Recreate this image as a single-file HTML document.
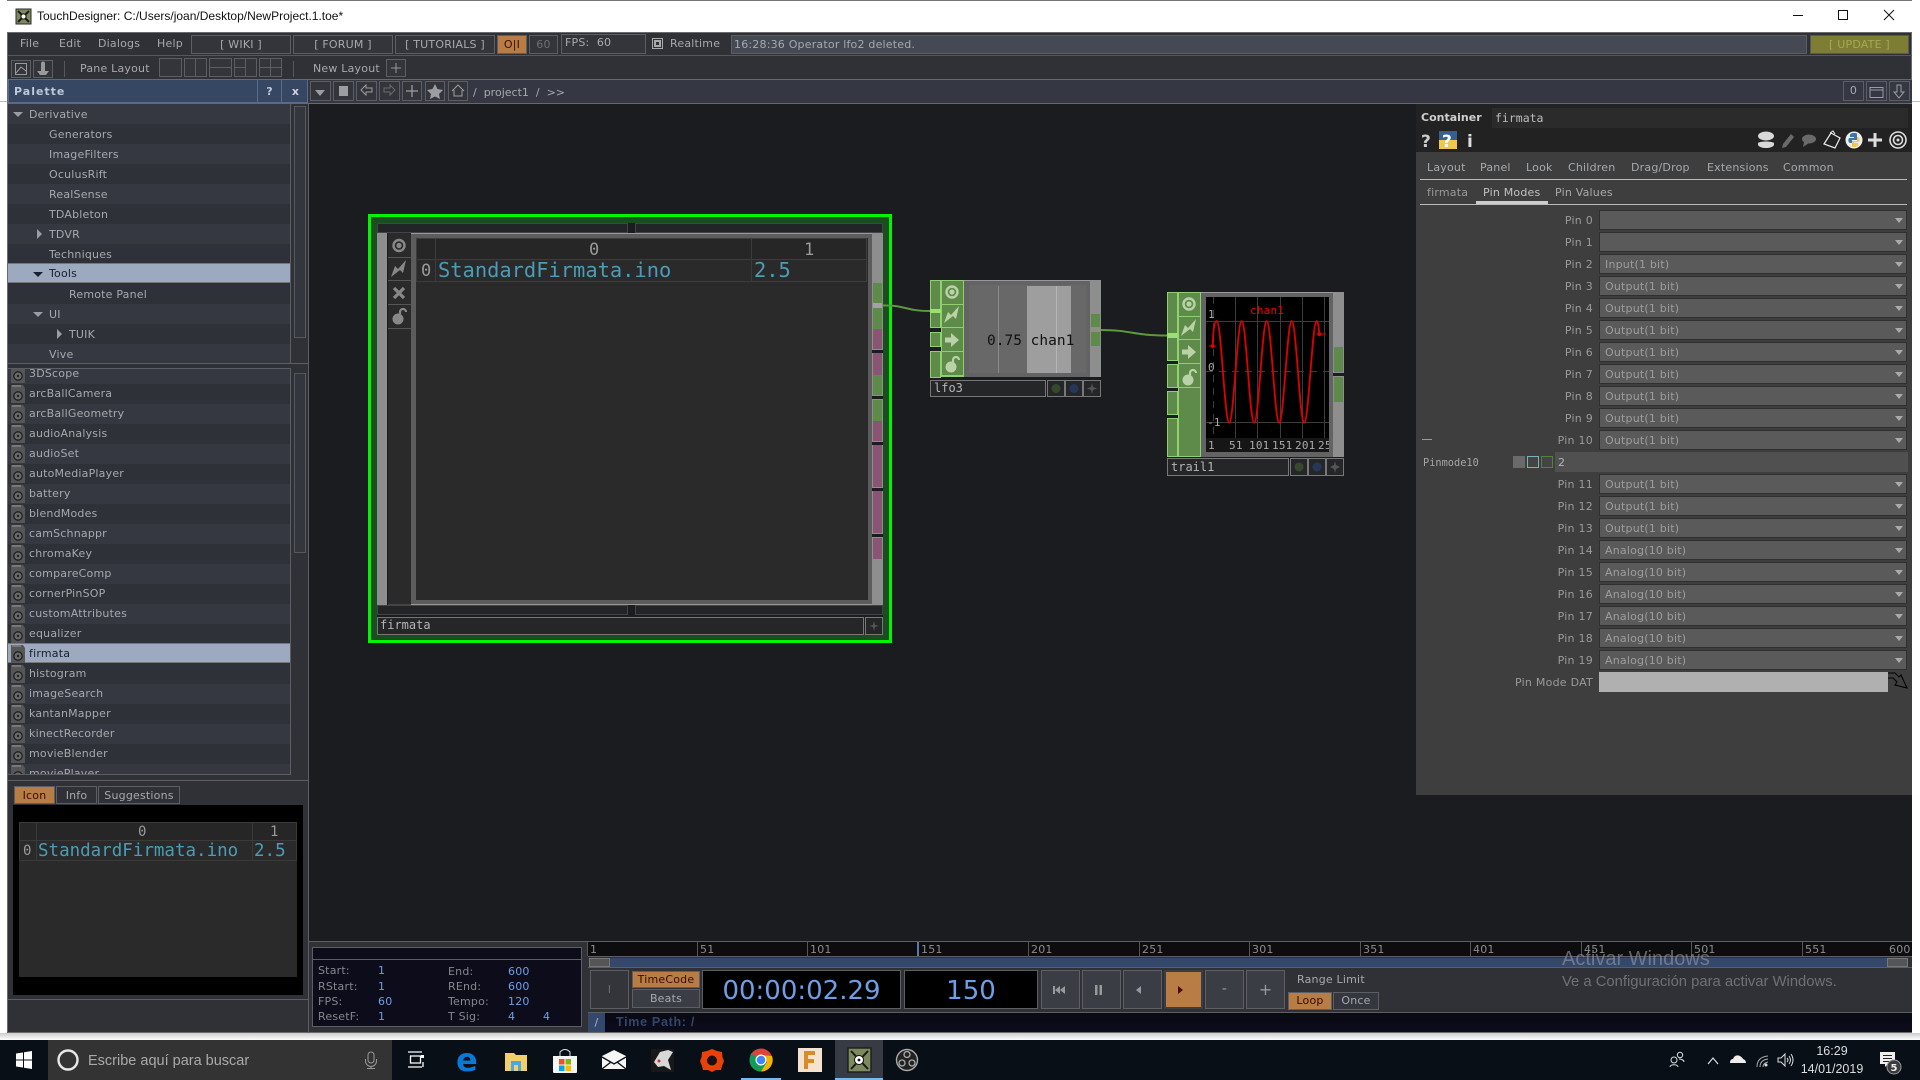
<!DOCTYPE html>
<html lang="es"><head><meta charset="utf-8"><title>TouchDesigner</title>
<style>
html,body{margin:0;padding:0;width:1920px;height:1080px;overflow:hidden;background:#fff}
body{position:relative;font:11px/1 "DejaVu Sans","Liberation Sans",sans-serif;color:#a6a9ad;letter-spacing:.2px}
div{position:absolute;box-sizing:border-box;white-space:nowrap}
.b{border:1px solid #5b5e63;text-align:center;line-height:17px;background:#33353b}
.r{left:8px;width:282px;height:20px;line-height:20px;padding-top:1px;background:#2e3138;color:#a6a9ad}
.r.o{background:#353841}
.r.s{background:#9da9bf;color:#17202e;border-top:1px solid #777;border-bottom:1px solid #777;line-height:18px;padding-top:1px}
.ops .r{padding-top:0}
.ops .r.s{padding-top:1px}
.l{left:1400px;width:193px;height:20px;line-height:20px;padding-top:1px;text-align:right;color:#9a9a9a;letter-spacing:.25px}
.d{left:1599px;width:308px;height:20px;line-height:18px;padding-top:1px;background:#5a5a5a;border:1px solid #2f2f2f;color:#9d9d9d;padding-left:5px}
.d:after{content:"";position:absolute;right:3px;top:7px;border:4px solid transparent;border-top:5px solid #aaa;border-bottom:0}
.m{font-family:"DejaVu Sans Mono","Liberation Mono",monospace;letter-spacing:0}
.lab{color:#85878c}.val{color:#6f9ee8}
.rt{top:942px;height:14px;line-height:14px;padding-top:1px;color:#8c8c8c;padding-left:2px;border-left:1px solid #555}
.tb{background:#3b3d44;border:1px solid #5d5f64;top:970px;width:39px;height:39px}
svg{position:absolute;left:0;top:0}
</style></head><body>

<!-- window frame -->
<div style="left:7px;top:0;width:1905px;height:32px;background:#fff;border-top:1px solid #777"></div>
<div style="left:7px;top:32px;width:1905px;height:1001px;background:#2f3136;border:1px solid #6a6a6a"></div>
<div style="left:0;top:101px;width:7px;height:1px;background:#bbb"></div>
<div style="left:1912px;top:101px;width:8px;height:1px;background:#bbb"></div>
<div style="left:0;top:1033px;width:1920px;height:7px;background:linear-gradient(#ccc,#fff)"></div>
<div style="left:37px;top:9px;color:#111;font:12px/14px 'Liberation Sans',sans-serif;letter-spacing:0">TouchDesigner: C:/Users/joan/Desktop/NewProject.1.toe*</div>

<!-- menu row -->
<div style="left:8px;top:55px;width:1904px;height:1px;background:#55575c"></div>
<div style="left:8px;top:79px;width:1904px;height:1px;background:#66686c"></div>
<div style="left:8px;top:103px;width:1904px;height:1px;background:#66686c"></div>
<div style="left:20px;top:36px;height:16px;line-height:16px">File</div>
<div style="left:59px;top:36px;height:16px;line-height:16px">Edit</div>
<div style="left:98px;top:36px;height:16px;line-height:16px">Dialogs</div>
<div style="left:157px;top:36px;height:16px;line-height:16px">Help</div>
<div class="b" style="left:191px;top:35px;width:100px;height:19px">[ WIKI ]</div>
<div class="b" style="left:293px;top:35px;width:100px;height:19px">[ FORUM ]</div>
<div class="b" style="left:395px;top:35px;width:100px;height:19px">[ TUTORIALS ]</div>
<div class="b" style="left:497px;top:35px;width:30px;height:19px;background:#b87d45;color:#3a0a00">O|I</div>
<div class="b" style="left:529px;top:35px;width:29px;height:19px;color:#6d6f73">60</div>
<div class="b" style="left:561px;top:34px;width:85px;height:20px;text-align:left;padding-left:3px;line-height:16px">FPS:&nbsp; 60</div>
<div style="left:670px;top:36px;height:16px;line-height:16px">Realtime</div>
<div class="b" style="left:731px;top:35px;width:1076px;height:19px;background:#454954;text-align:left;padding-left:2px">16:28:36 Operator lfo2 deleted.</div>
<div class="b" style="left:1810px;top:35px;width:99px;height:19px;background:#7d7d36;color:#a8a850;border-color:#55575c">[ UPDATE ]</div>

<!-- row 2 -->
<div class="b" style="left:11px;top:60px;width:20px;height:18px"></div>
<div class="b" style="left:33px;top:60px;width:20px;height:18px"></div>
<div style="left:64px;top:61px;width:1px;height:16px;background:#55575c"></div>
<div style="left:80px;top:61px;height:16px;line-height:16px">Pane Layout</div>
<div class="b" style="left:159px;top:58px;width:23px;height:19px"></div>
<div class="b" style="left:184px;top:58px;width:23px;height:19px"></div>
<div class="b" style="left:209px;top:58px;width:23px;height:19px"></div>
<div class="b" style="left:234px;top:58px;width:23px;height:19px"></div>
<div class="b" style="left:259px;top:58px;width:23px;height:19px"></div>
<div style="left:293px;top:61px;width:1px;height:16px;background:#55575c"></div>
<div style="left:313px;top:61px;height:16px;line-height:16px">New Layout</div>
<div class="b" style="left:386px;top:59px;width:20px;height:18px"></div>

<!-- palette header -->
<div style="left:8px;top:79px;width:300px;height:24px;background:#364763;border:1px solid #5a6a88;color:#bdc8da;font-weight:bold;line-height:24px;padding-left:5px;letter-spacing:1px">Palette</div>
<div style="left:257px;top:80px;width:25px;height:22px;border-left:1px solid #5a6a88;border-right:1px solid #5a6a88;color:#bdc8da;font-weight:bold;line-height:23px;text-align:center">?</div>
<div style="left:283px;top:80px;width:25px;height:22px;color:#cdd4e0;font-weight:bold;line-height:23px;text-align:center">x</div>

<!-- path row -->
<div style="left:308px;top:80px;width:1604px;height:23px;background:#353842"></div>
<div class="b" style="left:310px;top:81px;width:21px;height:20px"></div>
<div class="b" style="left:333px;top:81px;width:21px;height:20px"></div>
<div class="b" style="left:356px;top:81px;width:21px;height:20px"></div>
<div class="b" style="left:379px;top:81px;width:21px;height:20px"></div>
<div class="b" style="left:402px;top:81px;width:20px;height:20px"></div>
<div class="b" style="left:425px;top:81px;width:20px;height:20px"></div>
<div class="b" style="left:448px;top:81px;width:20px;height:20px"></div>
<div style="left:473px;top:85px;height:16px;line-height:16px;letter-spacing:0">/&nbsp; project1&nbsp; /&nbsp; &gt;&gt;</div>
<div class="b" style="left:1843px;top:81px;width:21px;height:20px;background:#353842">0</div>
<div class="b" style="left:1866px;top:81px;width:21px;height:20px;background:#353842"></div>
<div class="b" style="left:1889px;top:81px;width:21px;height:20px;background:#353842"></div>

<!-- network bg -->
<div style="left:308px;top:104px;width:1604px;height:838px;background:#1a1c20"></div>

<!-- tree list -->
<div class="r o" style="top:104px;padding-left:21px">Derivative</div>
<div class="r" style="top:124px;padding-left:41px">Generators</div>
<div class="r o" style="top:144px;padding-left:41px">ImageFilters</div>
<div class="r" style="top:164px;padding-left:41px">OculusRift</div>
<div class="r o" style="top:184px;padding-left:41px">RealSense</div>
<div class="r" style="top:204px;padding-left:41px">TDAbleton</div>
<div class="r o" style="top:224px;padding-left:41px">TDVR</div>
<div class="r" style="top:244px;padding-left:41px">Techniques</div>
<div class="r s" style="top:263px;padding-left:41px">Tools</div>
<div class="r" style="top:284px;padding-left:61px">Remote Panel</div>
<div class="r o" style="top:304px;padding-left:41px">UI</div>
<div class="r" style="top:324px;padding-left:61px">TUIK</div>
<div class="r o" style="top:344px;padding-left:41px;height:19px">Vive</div>
<div style="left:290px;top:104px;width:1px;height:259px;background:#5b5e63"></div>
<div style="left:294px;top:106px;width:12px;height:232px;background:#33363c;border:1px solid #54575c"></div>
<div style="left:8px;top:363px;width:300px;height:1px;background:#5b5e63"></div>
<div style="left:8px;top:368px;width:282px;height:1px;background:#5b5e63"></div>

<!-- operators list -->
<div class="ops" style="left:8px;top:369px;width:282px;height:405px;overflow:hidden">
<div class="r o" style="left:0;top:-5px;padding-left:21px">3DScope</div>
<div class="r" style="left:0;top:15px;padding-left:21px">arcBallCamera</div>
<div class="r o" style="left:0;top:35px;padding-left:21px">arcBallGeometry</div>
<div class="r" style="left:0;top:55px;padding-left:21px">audioAnalysis</div>
<div class="r o" style="left:0;top:75px;padding-left:21px">audioSet</div>
<div class="r" style="left:0;top:95px;padding-left:21px">autoMediaPlayer</div>
<div class="r o" style="left:0;top:115px;padding-left:21px">battery</div>
<div class="r" style="left:0;top:135px;padding-left:21px">blendModes</div>
<div class="r o" style="left:0;top:155px;padding-left:21px">camSchnappr</div>
<div class="r" style="left:0;top:175px;padding-left:21px">chromaKey</div>
<div class="r o" style="left:0;top:195px;padding-left:21px">compareComp</div>
<div class="r" style="left:0;top:215px;padding-left:21px">cornerPinSOP</div>
<div class="r o" style="left:0;top:235px;padding-left:21px">customAttributes</div>
<div class="r" style="left:0;top:255px;padding-left:21px">equalizer</div>
<div class="r s" style="left:0;top:274px;padding-left:21px">firmata</div>
<div class="r" style="left:0;top:295px;padding-left:21px">histogram</div>
<div class="r o" style="left:0;top:315px;padding-left:21px">imageSearch</div>
<div class="r" style="left:0;top:335px;padding-left:21px">kantanMapper</div>
<div class="r o" style="left:0;top:355px;padding-left:21px">kinectRecorder</div>
<div class="r" style="left:0;top:375px;padding-left:21px">movieBlender</div>
<div class="r o" style="left:0;top:395px;padding-left:21px">moviePlayer</div>
</div>
<div style="left:8px;top:774px;width:282px;height:1px;background:#5b5e63"></div>
<div style="left:290px;top:368px;width:1px;height:407px;background:#5b5e63"></div>
<div style="left:294px;top:373px;width:12px;height:180px;background:#33363c;border:1px solid #54575c"></div>
<div style="left:8px;top:780px;width:300px;height:1px;background:#5b5e63"></div>
<div style="left:308px;top:104px;width:1px;height:929px;background:#5b5e63"></div>

<!-- preview tabs -->
<div class="b" style="left:14px;top:786px;width:41px;height:18px;background:#b87d45;color:#3a0a00;line-height:18px">Icon</div>
<div class="b" style="left:56px;top:786px;width:41px;height:18px;background:#2f3136;line-height:18px">Info</div>
<div class="b" style="left:98px;top:786px;width:82px;height:18px;background:#2f3136;line-height:18px">Suggestions</div>
<div style="left:13px;top:805px;width:290px;height:190px;background:#000"></div>
<div style="left:19px;top:822px;width:278px;height:155px;background:#2a2a2a"></div>
<div style="left:19px;top:822px;width:278px;height:19px;background:#262626;border:1px solid #3a3a3a"></div>
<div style="left:19px;top:841px;width:278px;height:20px;border:1px solid #3a3a3a;border-top:0"></div>
<div style="left:36px;top:822px;width:1px;height:39px;background:#3a3a3a"></div>
<div style="left:252px;top:822px;width:1px;height:39px;background:#3a3a3a"></div>
<div class="m" style="left:138px;top:823px;color:#999;font-size:14px;line-height:19px">0</div>
<div class="m" style="left:270px;top:823px;color:#999;font-size:14px;line-height:19px">1</div>
<div class="m" style="left:23px;top:841px;color:#999;font-size:14px;line-height:20px">0</div>
<div class="m" style="left:38px;top:841px;color:#4c9bb8;font-size:17.5px;line-height:21px">StandardFirmata.ino</div>
<div class="m" style="left:254px;top:841px;color:#4c9bb8;font-size:17.5px;line-height:21px">2.5</div>
<div style="left:8px;top:999px;width:300px;height:1px;background:#5b5e63"></div>

<!-- firmata node -->
<div style="left:368px;top:214px;width:524px;height:429px;border:3px solid #00f500;background:#1a4d1f"></div>
<div style="left:375px;top:221px;width:510px;height:415px;background:#1a1c20;border:2px solid #1a4d1f"></div>
<div style="left:377px;top:223px;width:251px;height:10px;border:1px solid #444;background:#222427"></div>
<div style="left:635px;top:223px;width:248px;height:10px;border:1px solid #444;background:#222427"></div>
<div style="left:377px;top:233px;width:10px;height:372px;background:#8e8e8e"></div>
<div style="left:388px;top:233px;width:23px;height:372px;background:#2a2a2a;border-bottom:1px solid #444"></div>
<div style="left:388px;top:257px;width:23px;height:1px;background:#555"></div>
<div style="left:388px;top:280px;width:23px;height:1px;background:#555"></div>
<div style="left:388px;top:304px;width:23px;height:1px;background:#555"></div>
<div style="left:388px;top:328px;width:23px;height:1px;background:#555"></div>
<div style="left:411px;top:233px;width:461px;height:372px;background:#5c5c5c;border-top:1px solid #999;border-bottom:1px solid #999"></div>
<div style="left:416px;top:238px;width:452px;height:362px;background:#2a2a2a"></div>
<div style="left:416px;top:238px;width:451px;height:22px;background:#262626;border:1px solid #3c3c3c"></div>
<div style="left:416px;top:260px;width:451px;height:22px;border:1px solid #3c3c3c;border-top:0"></div>
<div style="left:435px;top:238px;width:1px;height:44px;background:#3c3c3c"></div>
<div style="left:751px;top:238px;width:1px;height:44px;background:#3c3c3c"></div>
<div class="m" style="left:589px;top:239px;color:#9a9a9a;font-size:17px;line-height:22px">0</div>
<div class="m" style="left:804px;top:239px;color:#9a9a9a;font-size:17px;line-height:22px">1</div>
<div class="m" style="left:421px;top:260px;color:#9a9a9a;font-size:17px;line-height:22px">0</div>
<div class="m" style="left:438px;top:258px;color:#4c9bb8;font-size:20.4px;line-height:24px">StandardFirmata.ino</div>
<div class="m" style="left:754px;top:258px;color:#4c9bb8;font-size:20.4px;line-height:24px">2.5</div>
<div style="left:872px;top:233px;width:11px;height:372px;background:#8e8e8e"></div>
<div style="left:873px;top:283px;width:9px;height:20px;background:#5e8a4a"></div>
<div style="left:873px;top:303px;width:9px;height:5px;background:#a2a2a6"></div>
<div style="left:873px;top:308px;width:9px;height:21px;background:#5e8a4a"></div>
<div style="left:873px;top:329px;width:9px;height:20px;background:#8a5474"></div>
<div style="left:872px;top:350px;width:11px;height:3px;background:#1a1c20"></div>
<div style="left:873px;top:353px;width:9px;height:22px;background:#8a5474"></div>
<div style="left:873px;top:375px;width:9px;height:20px;background:#5e8a4a"></div>
<div style="left:872px;top:396px;width:11px;height:3px;background:#1a1c20"></div>
<div style="left:873px;top:400px;width:9px;height:21px;background:#5e8a4a"></div>
<div style="left:873px;top:421px;width:9px;height:20px;background:#8a5474"></div>
<div style="left:872px;top:442px;width:11px;height:3px;background:#1a1c20"></div>
<div style="left:873px;top:445px;width:9px;height:42px;background:#8a5474"></div>
<div style="left:872px;top:488px;width:11px;height:3px;background:#1a1c20"></div>
<div style="left:873px;top:491px;width:9px;height:42px;background:#8a5474"></div>
<div style="left:872px;top:534px;width:11px;height:3px;background:#1a1c20"></div>
<div style="left:873px;top:538px;width:9px;height:21px;background:#8a5474"></div>
<div style="left:377px;top:605px;width:251px;height:10px;border:1px solid #444;background:#222427"></div>
<div style="left:635px;top:605px;width:248px;height:10px;border:1px solid #444;background:#222427"></div>
<div class="m" style="left:377px;top:617px;width:487px;height:18px;background:#242628;border:1px solid #777;color:#b5b5b5;font-size:12px;line-height:14px;padding-left:2px">firmata</div>
<div style="left:865px;top:617px;width:18px;height:18px;background:#242628;border:1px solid #777"></div>

<!-- lfo3 node -->
<div style="left:930px;top:280px;width:11px;height:48px;background:#5e8a4a;border:1px solid #8fd070"></div>
<div style="left:930px;top:332px;width:11px;height:15px;background:#5e8a4a;border:1px solid #8fd070"></div>
<div style="left:930px;top:351px;width:11px;height:27px;background:#5e8a4a;border:1px solid #8fd070"></div>
<div style="left:930px;top:309px;width:11px;height:4px;background:#9be070"></div>
<div style="left:941px;top:280px;width:23px;height:97px;background:#5e8a4a;border:1px solid #8fd070"></div>
<div style="left:941px;top:304px;width:23px;height:1px;background:#8fd070"></div>
<div style="left:941px;top:327px;width:23px;height:1px;background:#8fd070"></div>
<div style="left:941px;top:351px;width:23px;height:1px;background:#8fd070"></div>
<div style="left:941px;top:375px;width:23px;height:1px;background:#8fd070"></div>
<div style="left:964px;top:280px;width:126px;height:97px;background:#636363;border-top:1px solid #999"></div>
<div style="left:969px;top:285px;width:117px;height:88px;background:#686868"></div>
<div style="left:998px;top:286px;width:1px;height:87px;background:#8a8a8a"></div>
<div style="left:1027px;top:286px;width:44px;height:87px;background:#9e9e9e"></div>
<div style="left:1056px;top:286px;width:1px;height:87px;background:#b5b5b5"></div>
<div class="m" style="left:987px;top:331px;color:#111;font-size:14.5px;line-height:20px">0.75 chan1</div>
<div style="left:1090px;top:280px;width:11px;height:97px;background:#8e8e8e"></div>
<div style="left:1091px;top:314px;width:9px;height:13px;background:#5e8a4a"></div>
<div style="left:1091px;top:332px;width:9px;height:14px;background:#5e8a4a"></div>
<div class="m" style="left:930px;top:380px;width:116px;height:17px;background:#242628;border:1px solid #777;color:#b5b5b5;font-size:12px;line-height:15px;padding-left:3px">lfo3</div>
<div style="left:1047px;top:380px;width:18px;height:17px;background:#242628;border:1px solid #777"></div>
<div style="left:1065px;top:380px;width:18px;height:17px;background:#242628;border:1px solid #777"></div>
<div style="left:1083px;top:380px;width:18px;height:17px;background:#242628;border:1px solid #777"></div>

<!-- trail1 node -->
<div style="left:1167px;top:292px;width:11px;height:69px;background:#5e8a4a;border:1px solid #8fd070"></div>
<div style="left:1167px;top:364px;width:11px;height:24px;background:#5e8a4a;border:1px solid #8fd070"></div>
<div style="left:1167px;top:391px;width:11px;height:24px;background:#5e8a4a;border:1px solid #8fd070"></div>
<div style="left:1167px;top:418px;width:11px;height:39px;background:#5e8a4a;border:1px solid #8fd070"></div>
<div style="left:1167px;top:333px;width:11px;height:5px;background:#9be070"></div>
<div style="left:1178px;top:292px;width:23px;height:165px;background:#5e8a4a;border:1px solid #8fd070"></div>
<div style="left:1178px;top:316px;width:23px;height:1px;background:#8fd070"></div>
<div style="left:1178px;top:339px;width:23px;height:1px;background:#8fd070"></div>
<div style="left:1178px;top:363px;width:23px;height:1px;background:#8fd070"></div>
<div style="left:1178px;top:387px;width:23px;height:1px;background:#8fd070"></div>
<div style="left:1201px;top:292px;width:132px;height:165px;background:#636363;border-top:1px solid #999"></div>
<div style="left:1206px;top:297px;width:123px;height:155px;background:#000"></div>
<div style="left:1333px;top:292px;width:11px;height:165px;background:#8e8e8e"></div>
<div style="left:1334px;top:347px;width:9px;height:25px;background:#5e8a4a"></div>
<div style="left:1333px;top:373px;width:11px;height:3px;background:#1a1c20"></div>
<div style="left:1334px;top:377px;width:9px;height:25px;background:#5e8a4a"></div>
<div class="m" style="left:1167px;top:458px;width:122px;height:18px;background:#242628;border:1px solid #777;color:#b5b5b5;font-size:12px;line-height:16px;padding-left:3px">trail1</div>
<div style="left:1290px;top:458px;width:18px;height:18px;background:#242628;border:1px solid #777"></div>
<div style="left:1308px;top:458px;width:18px;height:18px;background:#242628;border:1px solid #777"></div>
<div style="left:1326px;top:458px;width:18px;height:18px;background:#242628;border:1px solid #777"></div>

<!-- parameters -->
<div style="left:1416px;top:104px;width:496px;height:691px;background:#3e3e3e"></div>
<div style="left:1416px;top:104px;width:496px;height:48px;background:#222"></div>
<div style="left:1421px;top:110px;height:16px;line-height:16px;color:#cfcfcf;font-weight:bold;letter-spacing:0">Container</div>
<div class="m" style="left:1492px;top:108px;width:416px;height:20px;background:#2b2b2b;color:#bbb;line-height:20px;padding-left:3px;font-size:11.5px">firmata</div>
<div style="left:1427px;top:160px;height:16px;line-height:16px">Layout</div>
<div style="left:1480px;top:160px;height:16px;line-height:16px">Panel</div>
<div style="left:1526px;top:160px;height:16px;line-height:16px">Look</div>
<div style="left:1568px;top:160px;height:16px;line-height:16px">Children</div>
<div style="left:1631px;top:160px;height:16px;line-height:16px">Drag/Drop</div>
<div style="left:1707px;top:160px;height:16px;line-height:16px">Extensions</div>
<div style="left:1783px;top:160px;height:16px;line-height:16px">Common</div>
<div style="left:1420px;top:179px;width:487px;height:1px;background:#bbb"></div>
<div style="left:1427px;top:185px;height:16px;line-height:16px;color:#9a9a9a">firmata</div>
<div style="left:1483px;top:185px;height:16px;line-height:16px;color:#c0c0c0">Pin Modes</div>
<div style="left:1555px;top:185px;height:16px;line-height:16px">Pin Values</div>
<div style="left:1420px;top:204px;width:487px;height:1px;background:#bbb"></div>
<div style="left:1476px;top:201px;width:72px;height:3px;background:#ccc"></div>

<div class="l" style="top:210px">Pin 0</div><div class="d" style="top:210px"></div>
<div class="l" style="top:232px">Pin 1</div><div class="d" style="top:232px"></div>
<div class="l" style="top:254px">Pin 2</div><div class="d" style="top:254px">Input(1 bit)</div>
<div class="l" style="top:276px">Pin 3</div><div class="d" style="top:276px">Output(1 bit)</div>
<div class="l" style="top:298px">Pin 4</div><div class="d" style="top:298px">Output(1 bit)</div>
<div class="l" style="top:320px">Pin 5</div><div class="d" style="top:320px">Output(1 bit)</div>
<div class="l" style="top:342px">Pin 6</div><div class="d" style="top:342px">Output(1 bit)</div>
<div class="l" style="top:364px">Pin 7</div><div class="d" style="top:364px">Output(1 bit)</div>
<div class="l" style="top:386px">Pin 8</div><div class="d" style="top:386px">Output(1 bit)</div>
<div class="l" style="top:408px">Pin 9</div><div class="d" style="top:408px">Output(1 bit)</div>
<div class="l" style="top:430px">Pin 10</div><div class="d" style="top:430px">Output(1 bit)</div>
<div style="left:1422px;top:439px;width:10px;height:1px;background:#999"></div>
<div class="m" style="left:1423px;top:453px;height:20px;line-height:20px;color:#a5a5a5;font-size:10.3px">Pinmode10</div>
<div style="left:1513px;top:456px;width:12px;height:12px;background:#6a6a6a"></div>
<div style="left:1527px;top:456px;width:12px;height:12px;border:1px solid #7db0b8;background:#444"></div>
<div style="left:1541px;top:456px;width:12px;height:12px;border:1px solid #56803f;background:#444"></div>
<div style="left:1555px;top:452px;width:353px;height:20px;background:#505050;color:#b5b5b5;line-height:20px;padding:1px 0 0 3px">2</div>
<div class="l" style="top:474px">Pin 11</div><div class="d" style="top:474px">Output(1 bit)</div>
<div class="l" style="top:496px">Pin 12</div><div class="d" style="top:496px">Output(1 bit)</div>
<div class="l" style="top:518px">Pin 13</div><div class="d" style="top:518px">Output(1 bit)</div>
<div class="l" style="top:540px">Pin 14</div><div class="d" style="top:540px">Analog(10 bit)</div>
<div class="l" style="top:562px">Pin 15</div><div class="d" style="top:562px">Analog(10 bit)</div>
<div class="l" style="top:584px">Pin 16</div><div class="d" style="top:584px">Analog(10 bit)</div>
<div class="l" style="top:606px">Pin 17</div><div class="d" style="top:606px">Analog(10 bit)</div>
<div class="l" style="top:628px">Pin 18</div><div class="d" style="top:628px">Analog(10 bit)</div>
<div class="l" style="top:650px">Pin 19</div><div class="d" style="top:650px">Analog(10 bit)</div>
<div class="l" style="top:672px">Pin Mode DAT</div>
<div style="left:1599px;top:672px;width:289px;height:20px;background:#b0b0b0"></div>

<!-- bottom bar -->
<div style="left:309px;top:941px;width:1603px;height:1px;background:#5b5e63"></div>
<div style="left:309px;top:942px;width:279px;height:90px;background:#2f3136"></div>
<div style="left:312px;top:947px;width:270px;height:80px;background:#0c0c1a;border:1px solid #5b5e63"></div>
<div style="left:312px;top:959px;width:270px;height:1px;background:#5b5e63"></div>
<div class="lab" style="left:318px;top:963px;line-height:16px">Start:</div><div class="val" style="left:378px;top:963px;line-height:16px">1</div>
<div class="lab" style="left:318px;top:979px;line-height:16px">RStart:</div><div class="val" style="left:378px;top:979px;line-height:16px">1</div>
<div class="lab" style="left:318px;top:994px;line-height:16px">FPS:</div><div class="val" style="left:378px;top:994px;line-height:16px">60</div>
<div class="lab" style="left:318px;top:1009px;line-height:16px">ResetF:</div><div class="val" style="left:378px;top:1009px;line-height:16px">1</div>
<div class="lab" style="left:448px;top:964px;line-height:16px">End:</div><div class="val" style="left:508px;top:964px;line-height:16px">600</div>
<div class="lab" style="left:448px;top:979px;line-height:16px">REnd:</div><div class="val" style="left:508px;top:979px;line-height:16px">600</div>
<div class="lab" style="left:448px;top:994px;line-height:16px">Tempo:</div><div class="val" style="left:508px;top:994px;line-height:16px">120</div>
<div class="lab" style="left:448px;top:1009px;line-height:16px">T Sig:</div><div class="val" style="left:508px;top:1009px;line-height:16px">4</div><div class="val" style="left:543px;top:1009px;line-height:16px">4</div>

<div style="left:588px;top:942px;width:1324px;height:14px;background:#0d0d0f"></div>
<div class="rt" style="left:587px">1</div>
<div class="rt" style="left:697px">51</div>
<div class="rt" style="left:807px">101</div>
<div class="rt" style="left:917px;border-left:2px solid #5a78b0">151</div>
<div class="rt" style="left:1028px">201</div>
<div class="rt" style="left:1139px">251</div>
<div class="rt" style="left:1249px">301</div>
<div class="rt" style="left:1360px">351</div>
<div class="rt" style="left:1470px">401</div>
<div class="rt" style="left:1581px">451</div>
<div class="rt" style="left:1691px">501</div>
<div class="rt" style="left:1802px">551</div>
<div class="rt" style="left:1887px;border:0">600</div>
<div style="left:588px;top:956px;width:1324px;height:12px;background:#2f3136;border-top:1px solid #5b5e63;border-bottom:1px solid #5b5e63"></div>
<div style="left:610px;top:958px;width:1277px;height:9px;background:#34486b"></div>
<div style="left:589px;top:958px;width:21px;height:9px;background:#555;border:1px solid #777"></div>
<div style="left:1887px;top:958px;width:21px;height:9px;background:#555;border:1px solid #777"></div>
<div style="left:588px;top:968px;width:1324px;height:44px;background:#2f3136"></div>
<div class="b" style="left:590px;top:970px;width:39px;height:39px;line-height:37px;background:#33353b;color:#6a6c70">I</div>
<div class="b" style="left:632px;top:971px;width:68px;height:17px;background:#b87d45;color:#3a0a00;line-height:15px">TimeCode</div>
<div class="b" style="left:632px;top:989px;width:68px;height:19px;background:#3b3d44">Beats</div>
<div style="left:702px;top:970px;width:199px;height:39px;background:#000;border:1px solid #5b5e63;color:#6f9ee8;font-size:26px;line-height:41px;text-align:center;letter-spacing:0">00:00:02.29</div>
<div style="left:904px;top:970px;width:134px;height:39px;background:#000;border:1px solid #5b5e63;color:#6f9ee8;font-size:26px;line-height:41px;text-align:center;letter-spacing:0">150</div>
<div class="tb" style="left:1041px"></div>
<div class="tb" style="left:1082px"></div>
<div class="tb" style="left:1123px"></div>
<div class="tb" style="left:1164px;background:#b87d45;border:2px solid #3b3d44"></div>
<div class="tb" style="left:1205px;color:#999;text-align:center;line-height:37px;font-size:14px">-</div>
<div class="tb" style="left:1246px;color:#999;text-align:center;line-height:37px;font-size:16px">+</div>
<div style="left:1297px;top:972px;line-height:16px">Range Limit</div>
<div class="b" style="left:1288px;top:992px;width:44px;height:18px;background:#b87d45;color:#3a0a00;line-height:16px">Loop</div>
<div class="b" style="left:1333px;top:992px;width:46px;height:18px;background:#34373f;line-height:16px">Once</div>
<div style="left:588px;top:1012px;width:1324px;height:20px;background:linear-gradient(#0a0a12,#0b0b1d);border-top:1px solid #5b5e63"></div>
<div style="left:588px;top:1013px;width:17px;height:19px;background:#34486b;color:#9fb4d8;text-align:center;line-height:19px">/</div>
<div style="left:616px;top:1014px;line-height:17px;color:#34466a;font-weight:bold;font-family:'Liberation Sans',sans-serif;font-size:12.5px;letter-spacing:.7px">Time Path: /</div>

<div style="left:1562px;top:947px;font:20px/24px 'Liberation Sans',sans-serif;color:rgba(150,152,158,.62);letter-spacing:0">Activar Windows</div>
<div style="left:1562px;top:973px;font:14.8px/18px 'Liberation Sans',sans-serif;color:rgba(150,152,158,.62);letter-spacing:0">Ve a Configuración para activar Windows.</div>

<!-- taskbar -->
<div style="left:0;top:1040px;width:1920px;height:40px;background:#080f17"></div>
<div style="left:48px;top:1040px;width:344px;height:40px;background:#333"></div>
<div style="left:88px;top:1052px;font:14.5px/18px 'Liberation Sans',sans-serif;color:#aaa;letter-spacing:0">Escribe aquí para buscar</div>
<div style="left:835px;top:1040px;width:48px;height:40px;background:#363b44"></div>
<div style="left:741px;top:1078px;width:40px;height:2px;background:#76b9ed"></div>
<div style="left:835px;top:1078px;width:48px;height:2px;background:#76b9ed"></div>
<div style="left:1800px;top:1042px;width:64px;text-align:center;font:12.5px/18px 'Liberation Sans',sans-serif;color:#ddd;letter-spacing:0">16:29</div>
<div style="left:1790px;top:1060px;width:84px;text-align:center;font:12.5px/18px 'Liberation Sans',sans-serif;color:#ddd;letter-spacing:0">14/01/2019</div>

<!-- icons and graphics -->
<svg width="1920" height="1080" viewBox="0 0 1920 1080" fill="none">
<defs>
<g id="ring"><circle r="5.5" stroke="currentColor" stroke-width="2.4"/><circle r="2.6" fill="currentColor"/></g>
<path id="bolt" fill="currentColor" d="M-8 8 L-4 -3 L-1 0 L7 -9 L4 4 L1 1 Z"/>
<path id="arrow" fill="currentColor" d="M-7 -2.5 H-1 V-7 L7 0 L-1 7 V2.5 H-7 Z"/>
<g id="lock"><circle cx="-1" cy="3" r="5.5" fill="currentColor"/><path d="M1 -2 V-4 A3 3 0 0 1 7 -4" stroke="currentColor" stroke-width="2.2"/></g>
<g id="pal"><path fill="#565656" d="M-7 -9 H5 L7 -6 V9 H-7 Z"/><path stroke="#999" d="M-6 -8 H3"/><circle cy="2" r="4.2" stroke="#1e1e1e" stroke-width="1.3" fill="#6a6a6a"/><circle cy="2" r="1.2" fill="#1e1e1e"/></g>
<g id="tri"><path fill="#9a9da2" d="M-5 -2 H5 L0 3 Z"/></g>
<path id="tri-r" fill="#9a9da2" d="M-2 -5 V5 L3 0 Z"/>
</defs>

<!-- title icon + controls -->
<rect x="16" y="9" width="15" height="15" fill="#7d8a5e" stroke="#2a2a2a"/>
<path d="M18 11 L29 22 M29 11 L18 22" stroke="#1a1a1a" stroke-width="2"/><circle cx="23.5" cy="16.5" r="2.6" fill="#fff" stroke="#111"/>
<path d="M1793 15.5 H1803" stroke="#111"/><rect x="1838.5" y="10.5" width="9" height="9" stroke="#111"/>
<path d="M1884 10 L1894 20 M1894 10 L1884 20" stroke="#111"/>
<!-- checkbox / pane icons -->
<rect x="652.5" y="38.5" width="10" height="10" stroke="#aaa"/><rect x="654" y="40" width="7" height="7" fill="#aaa"/><rect x="656" y="42" width="3" height="3" fill="#2f3136"/>
<rect x="15.5" y="63.5" width="11" height="11" stroke="#999"/><path d="M16 73 L21 67 L26 71" stroke="#999"/>
<path fill="#999" d="M37 71 H49 L46 75 H40 Z M41 64 H45 V71 H41 Z"/><circle cx="43" cy="63.5" r="2" fill="#999"/>
<path stroke="#5b5e63" d="M195.5 58 V77 M209 67.5 H232 M245.500 58 V77 M234 67.5 H245 M270.500 58 V77 M259 67.5 H282"/>
<path stroke="#999" d="M396 63 V73 M391 68 H401"/>
<!-- path row icons -->
<path fill="#9a9da2" d="M315 90 H325 L320 96 Z"/><rect x="339" y="86" width="9" height="10" fill="#9a9da2"/>
<path stroke="#9a9da2" d="M372 88 H366 V85 L361 90 L366 95 V92 H372 Z"/>
<path stroke="#6a6c70" d="M384 88 H390 V85 L395 90 L390 95 V92 H384 Z"/>
<path stroke="#9a9da2" stroke-width="1.300" d="M412 85 V97 M406 91 H418"/>
<path fill="#9a9da2" d="M435 84 L437.500 89 L443 90 L439 94 L440 99 L435 96.500 L430 99 L431 94 L427 90 L432.500 89 Z"/>
<path stroke="#9a9da2" d="M452 91 L458 85 L464 91 M454 90 V96 H462 V90"/>
<path stroke="#9a9da2" d="M1870 87.500 H1883 V97.500 H1870 Z M1870 90 H1883"/>
<path stroke="#9a9da2" d="M1897 85 H1901 V92 H1904 L1899 98 L1894 92 H1897 Z"/>
<!-- tree arrows -->
<use href="#tri" x="18" y="114"/><use href="#tri-r" x="39" y="234"/><path fill="#17202e" d="M33 272 H43 L38 277 Z"/><use href="#tri" x="38" y="314"/><use href="#tri-r" x="59" y="334"/>
<!-- palette icons -->
<clipPath id="clipList"><rect x="8" y="369" width="282" height="405"/></clipPath>
<g clip-path="url(#clipList)">
<use href="#pal" x="18" y="374"/><use href="#pal" x="18" y="394"/><use href="#pal" x="18" y="414"/><use href="#pal" x="18" y="434"/><use href="#pal" x="18" y="454"/><use href="#pal" x="18" y="474"/><use href="#pal" x="18" y="494"/><use href="#pal" x="18" y="514"/><use href="#pal" x="18" y="534"/><use href="#pal" x="18" y="554"/><use href="#pal" x="18" y="574"/><use href="#pal" x="18" y="594"/><use href="#pal" x="18" y="614"/><use href="#pal" x="18" y="634"/><use href="#pal" x="18" y="654"/><use href="#pal" x="18" y="674"/><use href="#pal" x="18" y="694"/><use href="#pal" x="18" y="714"/><use href="#pal" x="18" y="734"/><use href="#pal" x="18" y="754"/><use href="#pal" x="18" y="774"/>
</g>

<!-- firmata node icons -->
<g color="#888"><use href="#ring" x="399" y="245.500"/><use href="#bolt" x="399" y="269"/>
<path d="M394 288 L404 298 M404 288 L394 298" stroke="#888" stroke-width="3.200"/><use href="#lock" x="399" y="316"/></g>
<path fill="#555" d="M874 621 L875 625 L879 626 L875 627 L874 631 L873 627 L869 626 L873 625 Z"/>
<!-- wires -->
<path d="M883 305.500 C905 305 905 311 930 311" stroke="#5c9a3c" stroke-width="2"/>
<path d="M1101 330 C1132 330 1132 335.500 1167 335.500" stroke="#5c9a3c" stroke-width="2"/>
<!-- lfo3 icons -->
<g color="#b9d3a6"><use href="#ring" x="952" y="292"/><use href="#bolt" x="952" y="315"/><use href="#arrow" x="952" y="340"/><use href="#lock" x="952" y="364"/></g>
<circle cx="1056" cy="388.500" r="4.500" fill="#36482c"/><circle cx="1074" cy="388.500" r="4.500" fill="#27375a"/>
<path fill="#555" d="M1092 383 L1093 387 L1097 388.500 L1093 390 L1092 394 L1091 390 L1087 388.500 L1091 387 Z"/>
<!-- trail icons -->
<g color="#b9d3a6"><use href="#ring" x="1189" y="304"/><use href="#bolt" x="1189" y="328"/><use href="#arrow" x="1189" y="352"/><use href="#lock" x="1189" y="377"/></g>
<circle cx="1299" cy="467" r="4.500" fill="#36482c"/><circle cx="1317" cy="467" r="4.500" fill="#27375a"/>
<path fill="#555" d="M1335 461 L1336 465 L1340 467 L1336 469 L1335 473 L1334 469 L1330 467 L1334 465 Z"/>
<!-- chart -->
<svg x="1206" y="297" width="123" height="155" viewBox="1206 297 123 155">
<rect x="1206" y="438" width="123" height="14" fill="#161616"/>
<path stroke="#3c3c3c" d="M1235.500 297 V438 M1257.500 297 V438 M1280.500 297 V438 M1302.500 297 V438 M1324.500 297 V438 M1206 321.500 H1329 M1206 422.500 H1329"/>
<path stroke="#3c3c3c" stroke-dasharray="7 6" d="M1213.500 297 V438 M1206 371.500 H1329"/>
<path stroke="#e00000" stroke-width="1.800" d="M1212.700 346 C1213 330 1214.500 321 1216.700 321 c4.550 0 7.950 101.700 12.500 101.700 s7.950 -101.700 12.500 -101.700 s7.950 101.700 12.500 101.700 s7.950 -101.700 12.500 -101.700 s7.950 101.700 12.500 101.700 s7.950 -101.700 12.500 -101.700 s7.950 101.700 12.500 101.700 s7.950 -101.700 12.500 -101.700 C1318 321 1318.800 327 1319.300 334"/>
<circle cx="1212.700" cy="346" r="2" fill="#e00000"/><circle cx="1319.300" cy="334" r="2.200" fill="#e00000"/>
<path stroke="#e00000" d="M1209 346 H1216 M1322 334 H1326"/>
<g font-family="DejaVu Sans Mono,monospace" font-size="11" fill="#aaa">
<text x="1208" y="318">1</text><text x="1208" y="371">0</text><text x="1207" y="426">-1</text>
<text x="1208" y="449">1</text><text x="1229" y="449">51</text><text x="1249" y="449">101</text><text x="1272" y="449">151</text><text x="1295" y="449">201</text><text x="1318" y="449">251</text>
<text x="1250" y="314" fill="#f00000">chan1</text></g>
</svg>

<!-- param toolbar -->
<text x="1421" y="147" font-family="DejaVu Sans" font-weight="bold" font-size="17" fill="#ccc">?</text>
<rect x="1439" y="131" width="18" height="9" fill="#36618e"/><rect x="1439" y="140" width="18" height="9" fill="#f0c84a"/>
<text x="1442" y="147" font-family="DejaVu Sans" font-weight="bold" font-size="17" fill="#fff">?</text>
<text x="1467" y="147" font-family="DejaVu Sans" font-weight="bold" font-size="17" fill="#ddd">i</text>
<ellipse cx="1766" cy="136" rx="8" ry="4.500" fill="#d8d8d8"/><path fill="#d8d8d8" d="M1758 143 C1760 141 1772 141 1774 143 V145 C1772 149 1760 149 1758 145 Z"/>
<path fill="#6a6a6a" d="M1783 144 L1782 148 L1786 147 L1794 137 L1791 134 Z"/>
<ellipse cx="1809" cy="139" rx="7" ry="4.500" fill="#6a6a6a"/><path fill="#6a6a6a" d="M1804 142 L1803 147 L1809 143 Z"/>
<path stroke="#eee" stroke-width="1.200" d="M1824 144 L1831 133 L1840 138 L1835 148 Z" fill="#222"/><path stroke="#eee" d="M1830 133 L1833 131 L1835 134"/>
<circle cx="1854" cy="140" r="8.500" fill="#eee"/><path fill="#3d75a8" d="M1854 133 C1849 133 1850 136 1850 137 H1854 V138 H1849 C1848 140 1848 142 1850 143 H1852 V140 H1857 V134 C1857 133 1855 133 1854 133 Z"/><path fill="#f1c84a" d="M1854 147 C1859 147 1858 144 1858 143 H1854 V142 H1859 C1860 140 1860 138 1858 137 H1857 V141 H1852 V146 C1852 147 1853 147 1854 147 Z"/>
<path stroke="#ddd" stroke-width="3" d="M1875 133 V147 M1868 140 H1882"/>
<circle cx="1898" cy="140" r="8" stroke="#ddd" stroke-width="1.600"/><circle cx="1898" cy="140" r="4.500" stroke="#ddd" stroke-width="1.600"/><circle cx="1898" cy="140" r="1.500" fill="#ddd"/>
<path stroke="#000" stroke-width="1.100" fill="#3e3e3e" d="M1888 673 H1895 L1899 677 L1901 675 L1907 688 L1895 685 L1897 682 L1893 678 H1888"/>

<!-- transport icons -->
<path fill="#999" d="M1053 986 H1055 V994 H1053 Z M1060 986 V994 L1055 990 Z M1065 986 V994 L1060 990 Z"/>
<path fill="#999" d="M1095 985 H1097.500 V995 H1095 Z M1099.500 985 H1102 V995 H1099.500 Z"/>
<path fill="#999" d="M1141 986 V994 L1136 990 Z"/>
<path fill="#4a0a00" d="M1178 986 V994 L1183 990 Z"/>
<!-- taskbar icons -->
<path fill="#fff" d="M16 1053.500 L23 1052.500 V1059.500 H16 Z M24 1052.300 L32 1051 V1059.500 H24 Z M16 1060.500 H23 V1067.500 L16 1066.500 Z M24 1060.500 H32 V1069 L24 1067.700 Z"/>
<circle cx="68" cy="1060" r="9.500" stroke="#e8e8e8" stroke-width="2.400"/>
<rect x="368" y="1052" width="6" height="11" rx="3" stroke="#999"/><path stroke="#999" d="M365.500 1059 V1061 A5.500 5.500 0 0 0 376.500 1061 V1059 M371 1066.500 V1068 M367 1068.500 H375"/>
<path stroke="#fff" stroke-width="1.300" d="M408 1052 H422 M410.500 1056 H420.500 V1063 H410.500 Z M408 1067 H422 M423 1062 V1067"/><rect x="421" y="1055" width="3" height="3" fill="#fff"/>
<text x="456" y="1071" font-family="DejaVu Sans" font-weight="bold" font-size="32" fill="#0a78d7">e</text>
<path fill="#f3cf6a" d="M505 1053 H514 L516 1055 H527 V1071 H505 Z"/><rect x="511" y="1061" width="10" height="10" fill="#4aa8e0"/><rect x="514" y="1065" width="4" height="6" fill="#f3cf6a"/>
<path fill="#f4f4f4" d="M553 1056 H577 V1072 Q577 1073 575 1073 H555 Q553 1073 553 1072 Z"/><path stroke="#ddd" d="M560 1056 V1052 Q565 1047 570 1052 V1056"/>
<rect x="559" y="1059" width="5.500" height="5.500" fill="#f25022"/><rect x="565.500" y="1059" width="5.500" height="5.500" fill="#7fba00"/><rect x="559" y="1065.500" width="5.500" height="5.500" fill="#00a4ef"/><rect x="565.500" y="1065.500" width="5.500" height="5.500" fill="#ffb900"/>
<path fill="#f6f6f6" d="M602 1056 L614 1050 L626 1056 V1069 H602 Z"/><path stroke="#0a1018" stroke-width="1.400" d="M602 1057 L614 1064 L626 1057 M602 1069 L611 1062 M626 1069 L617 1062"/>
<rect x="651" y="1049" width="23" height="23" fill="#181818"/><path fill="#d8d8d8" d="M654 1062 L660 1052 L668 1050 L673 1052 L668 1060 L671 1070 L664 1066 L658 1067 Z"/><circle cx="659" cy="1061" r="1.500" fill="#c33"/>
<path fill="#e8410c" d="M712 1049 L717 1051 L722 1052 L722.500 1057 L724 1061 L722 1066 L721 1070 L716 1070 L712 1072 L708 1070 L703 1070 L702 1066 L700 1061 L701.500 1057 L702 1052 L707 1051 Z"/><circle cx="712" cy="1060.500" r="5" fill="#1a1010"/>
<circle cx="761" cy="1060" r="11.500" fill="#db4437"/><path fill="#0f9d58" d="M749.500 1060 A11.500 11.500 0 0 0 761 1071.500 L767 1062 L755 1056 L751 1053 Z"/><path fill="#f4b400" d="M761 1071.500 A11.500 11.500 0 0 0 772 1056 L761 1055 L767 1062 Z"/><circle cx="761" cy="1060" r="5.500" fill="#fff"/><circle cx="761" cy="1060" r="4.300" fill="#4285f4"/>
<rect x="798" y="1048" width="24" height="24" fill="#f4e3cf"/><path fill="#d98a2a" d="M804 1051 H815 V1055 H808 V1059 H814 V1063 H808 V1069 H804 Z"/>
<rect x="848" y="1048" width="23" height="24" fill="#7d8a5e" stroke="#1c1c1c" stroke-width="1.400"/><path stroke="#1a1a1a" stroke-width="2" d="M851 1051 L868 1069 M868 1051 L851 1069"/><circle cx="859" cy="1060" r="4.500" fill="#fff" stroke="#111"/><circle cx="859" cy="1060" r="1.400" fill="#111"/>
<circle cx="907" cy="1060" r="10.500" stroke="#aaa" stroke-width="1.400" fill="#222"/><circle cx="907" cy="1054.500" r="3" stroke="#aaa" stroke-width="1.300"/><circle cx="902" cy="1063" r="3" stroke="#aaa" stroke-width="1.300"/><circle cx="912" cy="1063" r="3" stroke="#aaa" stroke-width="1.300"/>
<!-- tray -->
<circle cx="1674" cy="1060" r="3" stroke="#ddd"/><path stroke="#ddd" d="M1670 1067 C1670 1064 1678 1064 1678 1067"/><circle cx="1680" cy="1055" r="2.700" stroke="#ddd"/><path stroke="#ddd" d="M1679 1059 C1681 1059 1684 1060 1684 1062"/>
<path stroke="#ddd" stroke-width="1.200" d="M1708 1064 L1713 1058 L1718 1064"/>
<path fill="#eee" d="M1730 1063 Q1730 1059 1733 1059 Q1735 1054 1740 1056 Q1743 1058 1743 1059 Q1746 1060 1746 1063 Z"/>
<path stroke="#aaa" d="M1757 1067 Q1757 1057 1768 1056 M1760 1067 Q1760 1060 1768 1059 M1763 1067 Q1763 1063 1768 1062"/><circle cx="1766" cy="1065" r="1.500" fill="#ddd"/>
<path stroke="#ddd" d="M1778 1058 H1781 L1785 1054 V1066 L1781 1062 H1778 Z M1787 1058 Q1789 1060 1787 1062 M1789 1056 Q1792 1060 1789 1064 M1791 1054 Q1795 1060 1791 1066"/>
<path fill="#eee" d="M1880 1052 H1895 V1064 H1888 L1885 1067 V1064 H1880 Z"/><path stroke="#222" d="M1883 1055.500 H1892 M1883 1058.500 H1892 M1883 1061.500 H1892"/>
<circle cx="1894" cy="1067" r="7" fill="#3a3a3a" stroke="#999"/>
<text x="1890.500" y="1071" font-family="DejaVu Sans" font-weight="bold" font-size="10" fill="#eee">5</text>
</svg>
</body></html>
